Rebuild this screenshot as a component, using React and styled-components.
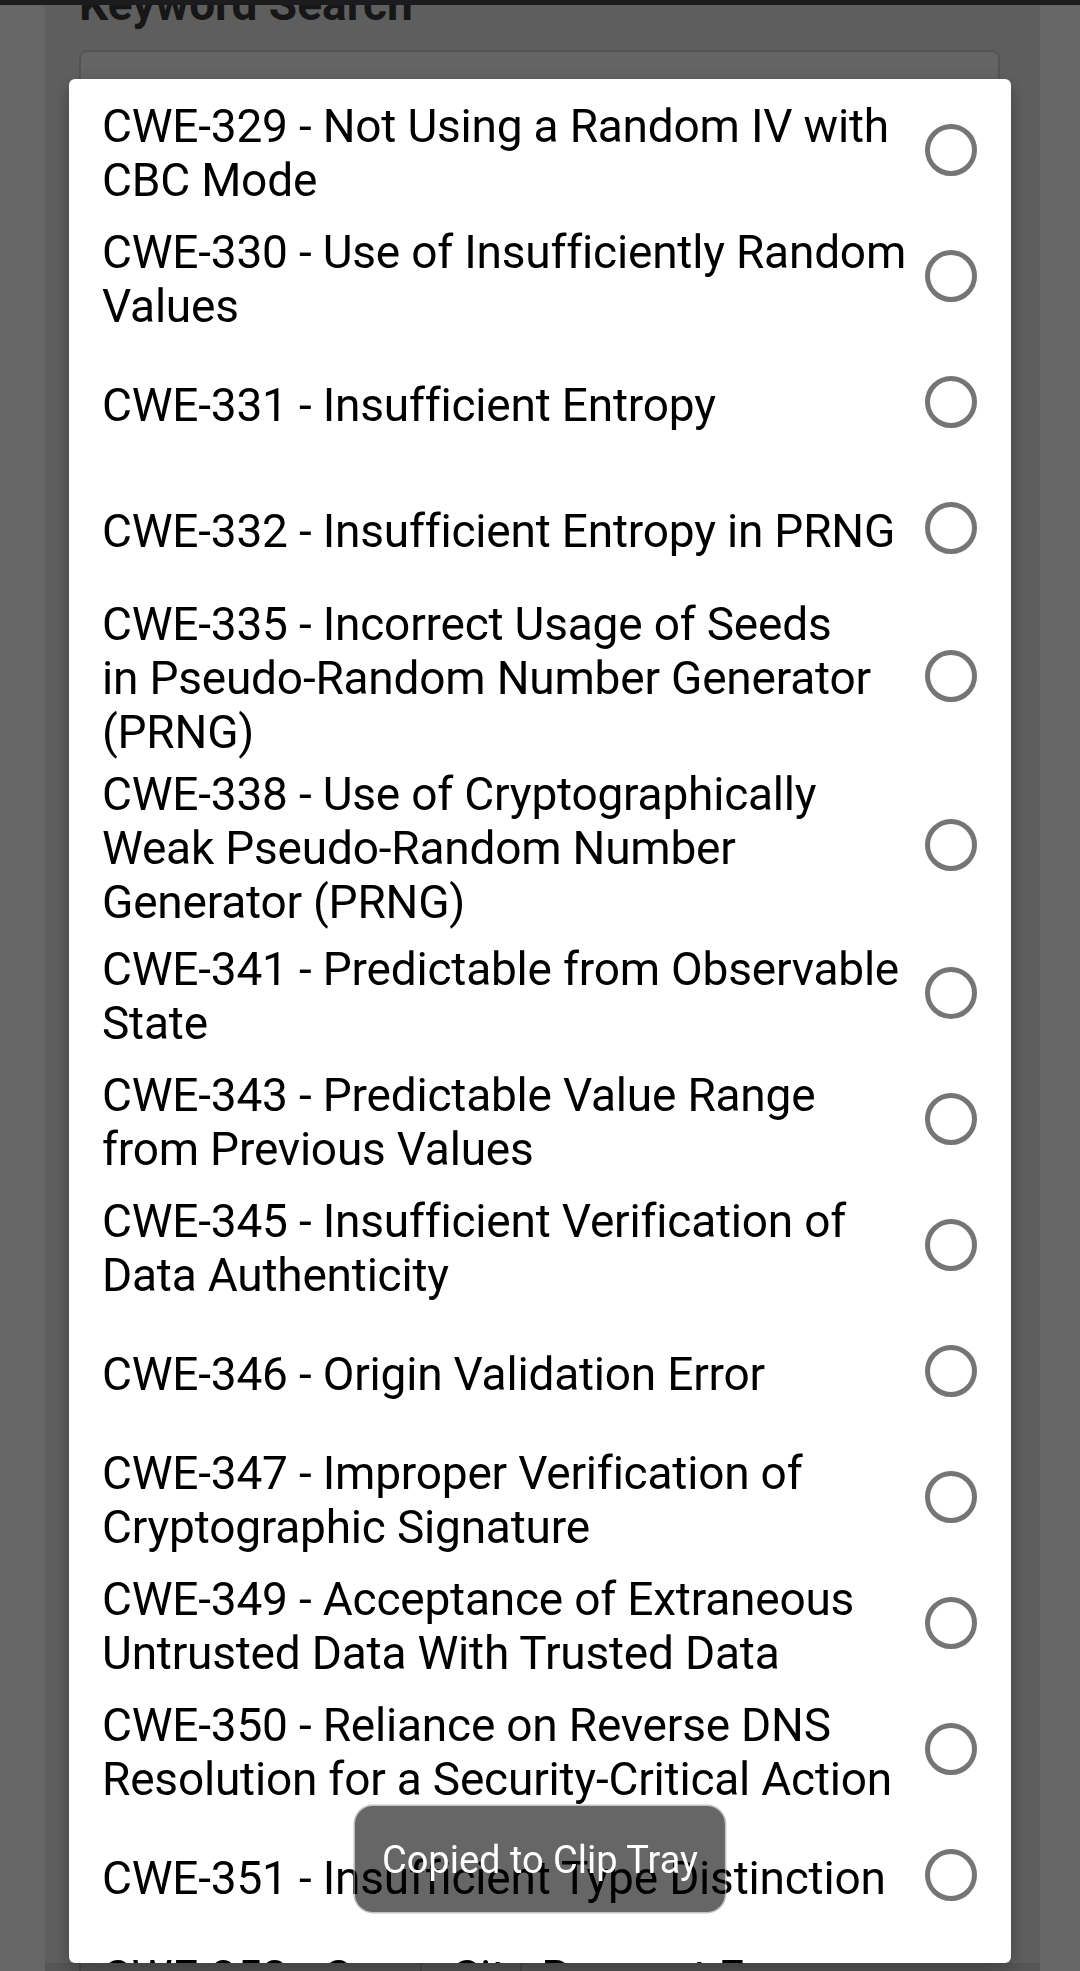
import React from 'react'
import styled, { createGlobalStyle } from 'styled-components'

const GlobalStyle = createGlobalStyle`
  html, body {
    margin: 0;
    padding: 0;
    background: #ffffff;
    font-family: Roboto, 'Noto Sans', 'Liberation Sans', sans-serif;
  }
  * {
    box-sizing: border-box;
  }
`

const weaknesses = [
  { id: 329, text: 'CWE-329 - Not Using a Random IV with\nCBC Mode' },
  { id: 330, text: 'CWE-330 - Use of Insufficiently Random\nValues' },
  { id: 331, text: 'CWE-331 - Insufficient Entropy' },
  { id: 332, text: 'CWE-332 - Insufficient Entropy in PRNG' },
  { id: 335, text: 'CWE-335 - Incorrect Usage of Seeds\nin Pseudo-Random Number Generator\n(PRNG)' },
  { id: 338, text: 'CWE-338 - Use of Cryptographically\nWeak Pseudo-Random Number\nGenerator (PRNG)' },
  { id: 341, text: 'CWE-341 - Predictable from Observable\nState' },
  { id: 343, text: 'CWE-343 - Predictable Value Range\nfrom Previous Values' },
  { id: 345, text: 'CWE-345 - Insufficient Verification of\nData Authenticity' },
  { id: 346, text: 'CWE-346 - Origin Validation Error' },
  { id: 347, text: 'CWE-347 - Improper Verification of\nCryptographic Signature' },
  { id: 349, text: 'CWE-349 - Acceptance of Extraneous\nUntrusted Data With Trusted Data' },
  { id: 350, text: 'CWE-350 - Reliance on Reverse DNS\nResolution for a Security-Critical Action' },
  { id: 351, text: 'CWE-351 - Insufficient Type Distinction' },
  { id: 352, text: 'CWE-352 - Cross-Site Request Forgery\n(CSRF)' },
]

export default function App() {
  return (
    <>
      <GlobalStyle />
      <Screen>
        <StatusBar />
        <Shell>
          <Card>
            <Heading>Keyword Search</Heading>
            <SearchBox />
          </Card>
        </Shell>
        <Footer>
          <FooterCell />
          <FooterCell $wide />
          <FooterCell />
        </Footer>
      </Screen>

      <Backdrop />
      <Dialog>
        <List>
          {weaknesses.map((w) => (
            <Row key={w.id}>
              <Label>{w.text}</Label>
              <Radio />
            </Row>
          ))}
        </List>
      </Dialog>

      <Toast>Copied to Clip Tray</Toast>
    </>
  )
}

const Screen = styled.div`
  height: 1971px;
  display: flex;
  flex-direction: column;
  overflow: hidden;
`

const StatusBar = styled.div`
  height: 5px;
  flex-shrink: 0;
  background: #1c1c1e;
  position: relative;
  z-index: 5;
`

const Shell = styled.div`
  flex: 1;
  display: flex;
  padding: 0 40px 0 45px;
`

const Card = styled.div`
  flex: 1;
  background: #ececec;
  padding: 0 34px;
  display: flex;
  flex-direction: column;
`

const Heading = styled.h2`
  margin: -27px 0 0;
  font-size: 46px;
  line-height: 52px;
  font-weight: 700;
  color: #3a3a3a;
`

const SearchBox = styled.div`
  margin-top: 20px;
  margin-right: 6px;
  height: 220px;
  border: 2px solid #d2d2d2;
  border-radius: 8px;
  background: #fafafa;
`

const Footer = styled.div`
  height: 8px;
  flex-shrink: 0;
  margin: 0 40px 0 45px;
  background: #d6d6d6;
  display: flex;
  padding-left: 34px;
`

const FooterCell = styled.div`
  width: ${(p) => (p.$wide ? '100px' : '341px')};
  border-left: 2px solid #b8b8b8;
`

const Backdrop = styled.div`
  position: fixed;
  inset: 0;
  background: rgba(0, 0, 0, 0.6);
  z-index: 1;
`

const Dialog = styled.div`
  position: fixed;
  top: 79px;
  left: 69px;
  width: 942px;
  height: 1884px;
  background: #ffffff;
  border-radius: 6px;
  overflow: hidden;
  z-index: 2;
  box-shadow: 0 6px 20px rgba(0, 0, 0, 0.3);
`

const List = styled.ul`
  list-style: none;
  margin: 0;
  padding: 8px 0 0;
`

const Row = styled.li`
  min-height: 126px;
  padding: 1.25px 34px 1.25px 33px;
  display: flex;
  align-items: center;
  justify-content: space-between;
`

const Label = styled.span`
  flex: 1;
  padding-top: 5px;
  white-space: pre;
  font-size: 46px;
  line-height: 54px;
  color: #000;
  letter-spacing: -0.2px;
`

const Radio = styled.span`
  width: 52px;
  height: 52px;
  flex-shrink: 0;
  margin-left: 12px;
  border: 5px solid #757575;
  border-radius: 50%;
`

const Toast = styled.div`
  position: fixed;
  top: 1806px;
  left: 50%;
  transform: translateX(-50%);
  height: 106px;
  padding: 2px 27px 0;
  display: flex;
  align-items: center;
  border-radius: 18px;
  background: rgba(0, 0, 0, 0.6);
  box-shadow: 0 0 0 1.5px rgba(170, 170, 170, 0.7);
  color: #ffffff;
  font-size: 38px;
  white-space: nowrap;
  z-index: 4;
`
